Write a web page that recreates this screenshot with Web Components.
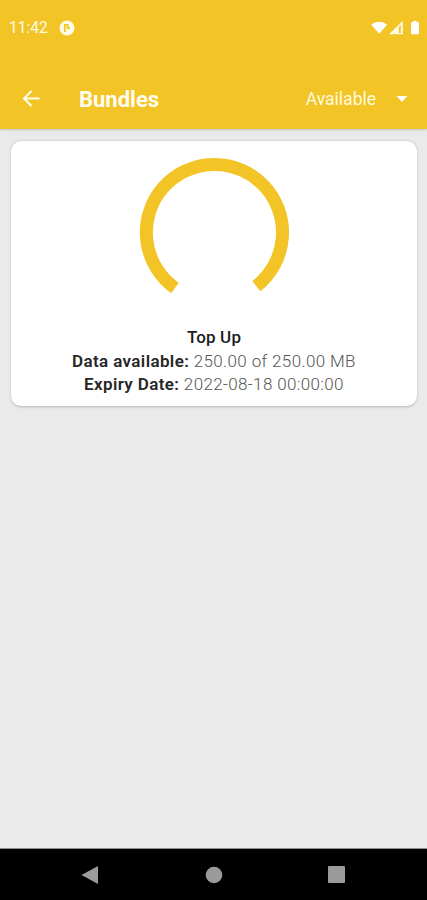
<!DOCTYPE html>
<html lang="en">
<head>
  <meta charset="utf-8">
  <meta name="viewport" content="width=device-width, initial-scale=1">
  <title>Bundles</title>
  <style>
    html, body {
      height: 100%;
      margin: 0;
    }

    body {
      --accent: #f2c425;
      --surface: #eaeaea;
      font-family: Roboto, "Liberation Sans", sans-serif;
      overflow: hidden;
    }
  </style>
</head>
<body>
  <app-screen>
    <status-bar slot="top" time="11:42"></status-bar>
    <app-toolbar slot="top">
      Bundles
      <filter-select slot="action">Available</filter-select>
    </app-toolbar>
    <bundle-card>
      <usage-gauge slot="gauge"></usage-gauge>
      <span slot="name">Top Up</span>
      <bundle-field label="Data available:">250.00 of 250.00 MB</bundle-field>
      <bundle-field label="Expiry Date:">2022-08-18 00:00:00</bundle-field>
    </bundle-card>
    <nav-bar slot="bottom"></nav-bar>
  </app-screen>

  <script>
    class AppScreen extends HTMLElement {
      constructor() {
        super();
        this.attachShadow({ mode: 'open' });
        this.shadowRoot.innerHTML = `
          <style>
            :host {
              display: flex;
              flex-direction: column;
              height: 100vh;
              background: var(--surface);
            }

            header {
              z-index: 1;
              background: var(--accent);
              box-shadow: 0 1px 2px rgba(0, 0, 0, 0.18);
            }

            main {
              flex: 1;
              padding: 12px 10px 0 11px;
            }
          </style>
          <header><slot name="top"></slot></header>
          <main><slot></slot></main>
          <slot name="bottom"></slot>
        `;
      }
    }

    class StatusBar extends HTMLElement {
      constructor() {
        super();
        this.attachShadow({ mode: 'open' });
      }

      connectedCallback() {
        this.shadowRoot.innerHTML = `
          <style>
            :host {
              display: flex;
              align-items: center;
              height: 55px;
              padding: 0 7px 0 9px;
              box-sizing: border-box;
              color: #fffbe6;
              font-size: 15.6px;
            }

            .time {
              width: 50px;
              padding-top: 1px;
            }

            .icons {
              margin-left: auto;
            }

            svg {
              display: block;
            }
          </style>
          <span class="time">${this.getAttribute('time')}</span>
          <svg width="16" height="16" viewBox="0 0 16 16">
            <circle cx="8" cy="8" r="7.5" fill="#fffbe6"/>
            <path d="M5.8 12V5M5 4.900h3.600M8.600 4v4.200h2.400" fill="none" stroke="#f2c425" stroke-width="1.8"/>
          </svg>
          <svg class="icons" width="50" height="16" viewBox="0 0 50 16">
            <path d="M1.300 4.700C5.800 0.700 12.500 0.700 17 4.700L9.200 13.800z" fill="#fff"/>
            <path d="M32.800 1V14.200H19z" fill="#fffbe6"/>
            <path d="M28.800 7v6h2V5z" fill="#f2c425"/>
            <path d="M42 2h1.500V0.800h3V2H48q1 0 1 1v10.200q0 1-1 1h-6q-1 0-1-1V3q0-1 1-1z" fill="#fff"/>
          </svg>
        `;
      }
    }

    class AppToolbar extends HTMLElement {
      constructor() {
        super();
        this.attachShadow({ mode: 'open' });
        this.shadowRoot.innerHTML = `
          <style>
            :host {
              display: flex;
              align-items: center;
              height: 74px;
              padding: 14px 19px 0 22px;
              box-sizing: border-box;
              color: #fffdf0;
            }

            button {
              display: block;
              width: 57px;
              padding: 0;
              border: 0;
              background: none;
              color: inherit;
            }

            svg {
              display: block;
            }

            h1 {
              flex: 1;
              margin: 0;
              padding-top: 2px;
              font-size: 22px;
              font-weight: 700;
              line-height: 26px;
            }
          </style>
          <button aria-label="Back">
            <svg width="18" height="18" viewBox="0 0 18 18" fill="none" stroke="currentColor" stroke-width="2">
              <path d="M17.500 8.500H2M9.500 1L2 8.500l7.500 7.500"/>
            </svg>
          </button>
          <h1><slot></slot></h1>
          <slot name="action"></slot>
        `;
      }
    }

    class FilterSelect extends HTMLElement {
      constructor() {
        super();
        this.attachShadow({ mode: 'open' });
        this.shadowRoot.innerHTML = `
          <style>
            :host {
              display: flex;
              align-items: center;
              gap: 20px;
              color: #fffadf;
              font-size: 17.5px;
            }
          </style>
          <span><slot></slot></span>
          <svg width="12" height="6" viewBox="0 0 12 6"><path d="M0.500 0h11L6 6z" fill="#fff"/></svg>
        `;
      }
    }

    class BundleCard extends HTMLElement {
      constructor() {
        super();
        this.attachShadow({ mode: 'open' });
        this.shadowRoot.innerHTML = `
          <style>
            :host {
              display: flex;
              flex-direction: column;
              align-items: center;
              height: 264.5px;
              padding-top: 16px;
              box-sizing: border-box;
              border-radius: 10px;
              background: #fff;
              box-shadow: 0 0.500px 2.500px rgba(0, 0, 0, 0.22);
              font-size: 17px;
              line-height: 23.500px;
            }

            .name {
              margin-top: 19px;
              color: #1c1c1c;
              font-weight: 500;
              letter-spacing: 0.15px;
            }
          </style>
          <slot name="gauge"></slot>
          <div class="name"><slot name="name"></slot></div>
          <slot></slot>
        `;
      }
    }

    class UsageGauge extends HTMLElement {
      constructor() {
        super();
        this.attachShadow({ mode: 'open' });
        this.shadowRoot.innerHTML = `
          <style>
            :host {
              display: block;
            }

            svg {
              display: block;
            }
          </style>
          <svg width="150" height="150" viewBox="0 0 150 150">
            <path d="M36 131A68.100 68.100 0 1 1 117.300 129.200" fill="none" stroke="#f2c425" stroke-width="13"/>
          </svg>
        `;
      }
    }

    class BundleField extends HTMLElement {
      constructor() {
        super();
        this.attachShadow({ mode: 'open' });
      }

      connectedCallback() {
        this.shadowRoot.innerHTML = `
          <style>
            :host {
              display: block;
              color: #555;
              font-weight: 300;
              letter-spacing: 0.37px;
              white-space: nowrap;
            }

            b {
              color: #262626;
              font-weight: 600;
            }
          </style>
          <b>${this.getAttribute('label')}</b> <slot></slot>
        `;
      }
    }

    class NavBar extends HTMLElement {
      constructor() {
        super();
        this.attachShadow({ mode: 'open' });
        this.shadowRoot.innerHTML = `
          <style>
            :host {
              display: flex;
              align-items: center;
              justify-content: space-between;
              height: 52px;
              padding: 0 82px 0 81px;
              box-sizing: border-box;
              border-top: 1px solid #8c8c8c;
              background: #000;
            }

            svg {
              fill: #9b9b9b;
            }
          </style>
          <svg width="18" height="20" viewBox="0 0 18 20"><path d="M0.500 10L17 1v18z"/></svg>
          <svg width="18" height="18" viewBox="0 0 18 18"><circle cx="9" cy="9" r="8.300"/></svg>
          <svg width="17" height="17" viewBox="0 0 17 17"><rect width="17" height="17" rx="1"/></svg>
        `;
      }
    }

    customElements.define('app-screen', AppScreen);
    customElements.define('status-bar', StatusBar);
    customElements.define('app-toolbar', AppToolbar);
    customElements.define('filter-select', FilterSelect);
    customElements.define('bundle-card', BundleCard);
    customElements.define('usage-gauge', UsageGauge);
    customElements.define('bundle-field', BundleField);
    customElements.define('nav-bar', NavBar);
  </script>
</body>
</html>
